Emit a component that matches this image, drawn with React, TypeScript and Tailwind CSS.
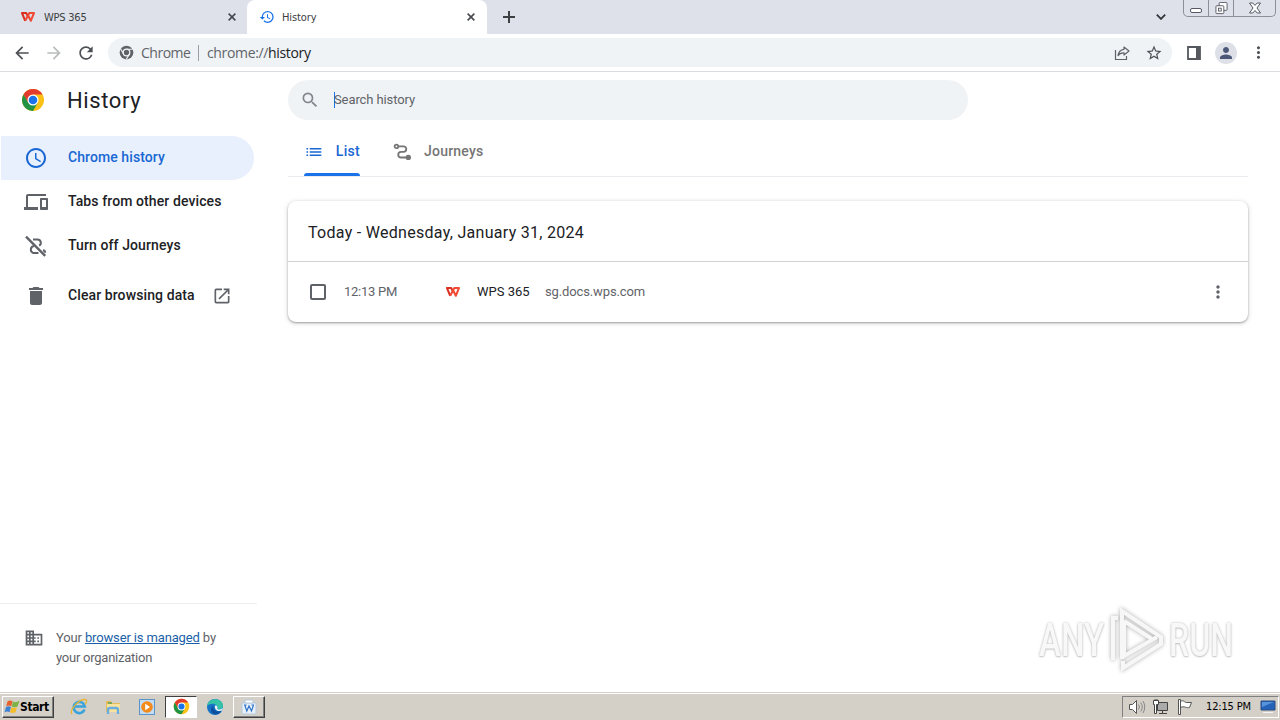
import React from 'react';
import {
  MdAccessTime,
  MdArrowBack,
  MdArrowForward,
  MdDelete,
  MdDevices,
  MdDomain,
  MdHistory,
  MdList,
  MdMoreVert,
  MdOpenInNew,
  MdPerson,
  MdRefresh,
  MdSearch,
  MdStarBorder,
} from 'react-icons/md';

interface IconProps {
  className?: string;
}

const WpsLogo: React.FC<IconProps> = ({ className }) => (
  <svg viewBox="0 0 16 12" className={className} fill="none" strokeLinejoin="round">
    <path d="M5.200 9.800L2 2h4.200L8 5.800" stroke="#d9301f" strokeWidth="2" />
    <path d="M5.200 9.800L9.300 2H14l-3.200 7.800L8 4" stroke="#f04a34" strokeWidth="2" />
  </svg>
);

const CloseIcon: React.FC<IconProps> = ({ className }) => (
  <svg viewBox="0 0 10 10" className={className} stroke="#45484d" strokeWidth="2">
    <path d="M.8.800l8.400 8.400M9.200.800L.8 9.200" />
  </svg>
);

const ChromeLogo: React.FC<IconProps> = ({ className }) => (
  <svg viewBox="0 0 48 48" className={className}>
    <circle cx="24" cy="24" r="22" fill="#fbc116" />
    <path d="M24 13H43.1A22 22 0 0 0 4.95 13L14.5 29.5 24 24z" fill="#e33b2e" />
    <path d="M14.5 29.5L4.95 13A22 22 0 0 0 24 46L33.5 29.5 24 24z" fill="#229342" />
    <circle cx="24" cy="24" r="11" fill="#fff" />
    <circle cx="24" cy="24" r="8.6" fill="#1a73e8" />
  </svg>
);

const ChromeMono: React.FC<IconProps> = ({ className }) => (
  <svg viewBox="0 0 48 48" className={className}>
    <circle cx="24" cy="24" r="22" fill="#5f6368" />
    <circle cx="24" cy="24" r="10.5" fill="none" stroke="#f1f3f4" strokeWidth="4" />
    <path d="M24 13.5H44M14.9 29.2L5 12M33.1 29.2L23 46.5" stroke="#f1f3f4" strokeWidth="3.6" />
  </svg>
);

const JourneysIcon: React.FC<IconProps> = ({ className }) => (
  <svg viewBox="0 0 20 18" className={className} fill="none" stroke="currentColor" strokeWidth="1.8">
    <circle cx="3.4" cy="3.4" r="1.8" />
    <path d="M5.300 3.400H10.600a2.700 2.700 0 0 1 0 5.400H8.100a2.800 2.800 0 0 0 0 5.700H14" />
    <circle cx="15.3" cy="14.4" r="1.8" fill="currentColor" />
  </svg>
);

const JourneysOffIcon: React.FC<IconProps> = ({ className }) => (
  <svg viewBox="0 0 24 24" className={className} fill="none" stroke="currentColor" strokeWidth="2">
    <path d="M2 2.7L21.2 21.9" strokeWidth="2.4" />
    <path d="M9 5.500h4.500a3.300 3.300 0 0 1 1.600 6.200M10 12a3.600 3.600 0 0 0-.7 7h5.200M19 16.300a2.600 2.600 0 0 1 2.200 2.400" />
  </svg>
);

const navItems = [
  { label: 'Tabs from other devices', icon: MdDevices },
  { label: 'Turn off Journeys', icon: JourneysOffIcon },
];

const TabStrip = () => (
  <div className="flex h-[34px] bg-[#dee1e9] text-[11px] text-[#3c4043] font-['DejaVu_Sans_Condensed','Noto_Sans',sans-serif]">
    <div className="flex w-[247px] items-center pl-5">
      <WpsLogo className="h-3 w-4" />
      <span className="ml-2 pt-0.5 tracking-[-0.22px]">WPS 365</span>
      <CloseIcon className="ml-auto mr-[11px] size-2" />
    </div>
    <div className="flex w-60 items-center rounded-t-lg bg-white pl-3">
      <MdHistory className="size-4 text-[#1a73e8]" />
      <span className="ml-[7px] pt-0.5 tracking-[-0.1px]">History</span>
      <CloseIcon className="ml-auto mr-[12px] size-2" />
    </div>
    <div className="flex w-[42px] items-center rounded-bl-lg pl-4">
      <svg viewBox="0 0 12 12" className="size-3" stroke="#3c4043" strokeWidth="2">
        <path d="M6 0v12M0 6h12" />
      </svg>
    </div>
    <svg viewBox="0 0 10 6" className="ml-auto mr-[17px] mt-[14px] h-[6px] w-[10px]" fill="none" stroke="#33363b" strokeWidth="1.800">
      <path d="M.8.700L5 4.900 9.200.700" />
    </svg>
    <div className="mr-1 flex h-[17px] w-[93px] rounded-b-[5px] border border-t-0 border-[#8b8f99]">
      <div className="flex w-[25px] items-end justify-center border-r border-[#8b8f99] pb-[3px]">
        <span className="h-[5px] w-3 rounded-[2px] border border-[#555963] bg-white" />
      </div>
      <div className="flex w-[25px] justify-center border-r border-[#8b8f99] pt-[2px]">
        <svg viewBox="0 0 14 14" className="size-[13px]" fill="#fff" stroke="#555963">
          <rect x="4.5" y=".5" width="8.5" height="8.5" rx="1" />
          <rect x="1" y="4" width="8.5" height="8.5" rx="1" />
          <rect x="3.7" y="6.7" width="3" height="3" />
        </svg>
      </div>
      <div className="flex flex-1 justify-center pt-[2px]">
        <svg viewBox="0 0 14 12" className="h-[12px] w-[14px]" fill="#fff" stroke="#555963" strokeLinejoin="round">
          <path d="M1.5 1h3.3L7 3.4 9.2 1h3.3L9 6l3.5 5H9.2L7 8.5 4.8 11H1.5L5 6z" />
        </svg>
      </div>
    </div>
  </div>
);

const Toolbar = () => (
  <div className="flex h-[38px] items-center border-b border-[#dadce0] bg-white pl-3 text-[#4d5156]">
    <MdArrowBack className="size-5" />
    <MdArrowForward className="ml-3 size-5 text-[#babcbe]" />
    <MdRefresh className="ml-3 size-5" />
    <div className="ml-3 flex h-[29px] w-16 flex-1 items-center rounded-full bg-[#eff3f6] pl-[11px] text-[14px] font-['Open_Sans',sans-serif]">
      <ChromeMono className="size-[15px]" />
      <span className="ml-[7px] w-[51px] tracking-[-0.5px] text-[#5f6368]">Chrome</span>
      <span className="ml-[6px] mr-2 h-4 w-px bg-[#9aa0a6]" />
      <span className="tracking-[-0.35px] text-[#5f6368]">
        chrome://<span className="text-[#202124]">history</span>
      </span>
      <svg viewBox="0 0 16 16" className="ml-auto size-4" fill="none" stroke="#5f6368" strokeWidth="1.2">
        <path d="M1.5 5v9.5h11V11" />
        <path d="M10 2l5 4-5 4V7.8C7 7.6 5.3 8.6 4 10.6 4.5 7 6.700 4.700 10 4.300z" strokeLinejoin="round" />
      </svg>
      <MdStarBorder className="ml-[15px] mr-[9px] size-[18px]" />
    </div>
    <svg viewBox="0 0 14 14" className="ml-[15px] size-[14px]">
      <path d="M1 1h12v12H1z" fill="none" stroke="#55585d" strokeWidth="1.8" />
      <path d="M9 1h4v12H9z" fill="#55585d" />
    </svg>
    <div className="ml-[14px] flex size-[22px] items-center justify-center rounded-full bg-[#dde1e7]">
      <MdPerson className="size-[18px] text-[#4b5878]" />
    </div>
    <MdMoreVert className="ml-[12px] mr-[12px] size-[19px]" />
  </div>
);

const Sidebar = () => (
  <aside className="flex w-64 shrink-0 flex-col text-[14px] font-medium text-[#202124]">
    <div className="flex h-14 items-center pl-[21px]">
      <ChromeLogo className="size-6" />
      <h1 className="ml-[22px] text-[22px] font-normal tracking-[0.6px]">History</h1>
    </div>
    <nav className="pt-2">
      <div className="ml-px mr-[2px] flex h-11 items-center rounded-r-full bg-[#e8f0fe] pl-[23px] text-[#1967d2]">
        <MdAccessTime className="size-6" />
        <span className="ml-5 pb-0.5 tracking-[0.08px]">Chrome history</span>
      </div>
      {navItems.map(({ label, icon: Icon }) => (
        <div key={label} className="flex h-11 items-center pl-6">
          <Icon className="size-6 text-[#5f6368]" />
          <span className="ml-5 pb-0.5 tracking-[0.1px]">{label}</span>
        </div>
      ))}
      <div className="mt-1.5 flex h-11 items-center pl-6">
        <MdDelete className="size-6 text-[#5f6368]" />
        <span className="ml-5 w-[127px] whitespace-nowrap pb-0.5 tracking-[0.1px]">Clear browsing data</span>
        <MdOpenInNew className="ml-[17px] size-5 text-[#5f6368]" />
      </div>
    </nav>
    <div className="mt-auto flex h-[89px] w-[257px] border-t border-[#eceef0] pl-6 pt-6">
      <MdDomain className="size-5 text-[#5f6368]" />
      <p className="ml-3 text-[13px] font-normal leading-5 tracking-[-0.14px] text-[#5f6368]">
        Your <span className="text-[#1a5fa8] underline">browser is managed</span> by
        <br />
        <span className="tracking-[-0.24px]">your organization</span>
      </p>
    </div>
  </aside>
);

const HistoryCard = () => (
  <section className="mt-6 h-[121px] w-[960px] rounded-lg bg-white shadow-[0_1px_2px_rgba(60,64,67,0.4),0_1px_5px_rgba(60,64,67,0.22)]">
    <div className="flex h-[61px] items-center border-b border-[#d0d3d6] pl-5 pt-1 text-[16px] tracking-[0.29px] text-[#202124]">
      Today - Wednesday, January 31, 2024
    </div>
    <div className="flex h-[60px] items-center pl-[22px] text-[13px] text-[#5f6368]">
      <span className="size-4 rounded-[2px] border-2 border-[#5f6368]" />
      <span className="ml-[18px] w-[101px] tracking-[-0.25px]">12:13 PM</span>
      <WpsLogo className="h-3 w-4" />
      <span className="ml-4 w-[53px] whitespace-nowrap text-[#202124]">WPS 365</span>
      <span className="ml-[15px] tracking-[-0.13px]">sg.docs.wps.com</span>
      <MdMoreVert className="ml-auto mr-5 size-5" />
    </div>
  </section>
);

const Watermark = () => (
  <div className="absolute bottom-[19px] right-[46px] flex h-[66px] items-center font-['Roboto',sans-serif] text-[46px] font-medium text-[#f8f8f8] [text-shadow:0_0_3px_#bbb,0_1px_2px_#ccc]">
    <span className="-ml-px w-[68px]">
      <span className="inline-block origin-left scale-x-[0.72]">ANY</span>
    </span>
    <svg viewBox="0 0 58 66" className="h-[66px] w-[58px] drop-shadow-[0_0_2px_#aaa]" fill="none" stroke="#f7f7f7" strokeWidth="4">
      <path d="M15 52V4L54 30v7L16 61v-7" />
      <path d="M6 53V11h5M17 14l28 18M17 14v35l33-19" />
    </svg>
    <span className="ml-[4px] w-[65px]">
      <span className="inline-block origin-left scale-x-[0.7]">RUN</span>
    </span>
  </div>
);

const Taskbar = () => (
  <footer className="flex h-7 items-center border-t border-[#d4d0c8] bg-[#d4d0c8] pl-[2px] font-['DejaVu_Sans_Condensed',sans-serif] text-[11px] text-black shadow-[inset_0_1px_0_#fff]">
    <div className="flex h-[22px] w-[52px] items-center border border-b-[#404040] border-l-white border-r-[#404040] border-t-white pl-px shadow-[inset_-1px_-1px_0_#808080]">
      <svg viewBox="0 0 16 16" className="size-4 shrink-0">
        <path d="M3.600 2.200q2.500-1.500 5 0L7.200 7.300q-2.500-1.500-5 0z" fill="#e8602c" />
        <path d="M9 2.600q2.800 1.500 6.500-.8L13.500 7.500q-3.300 1.500-5.800 0z" fill="#7cb342" />
        <path d="M2 7.900q2.500-1.500 5 0l-1.500 5.300q-2.400-1.500-5 0z" fill="#3e83d1" />
        <path d="M7.500 8.200q2.500 1.500 5.500.100L11.500 13.200q-3 1.500-5.500 0z" fill="#f4bd28" />
      </svg>
      <span className="text-[12px] font-bold tracking-[-0.4px]">Start</span>
    </div>
    <svg viewBox="0 0 18 18" className="ml-4 size-[18px]">
      <path d="M14.500 11.500a5.600 5.600 0 1 1 .3-3H5" fill="none" stroke="#3ba3dc" strokeWidth="2.600" />
      <path d="M2 16C-1 12 9 1 15 1.500c3 .500 1 4 0 5" fill="none" stroke="#e5b534" strokeWidth="1.300" />
    </svg>
    <svg viewBox="0 0 18 18" className="ml-4 size-[18px]">
      <path d="M2 3h5l1 2h8v9H2z" fill="#e3bd58" />
      <path d="M3 6h13v8H3z" fill="#f7e39d" />
      <path d="M4 16v-4q0-2 2-2h6q2 0 2 2v4" fill="none" stroke="#69aede" strokeWidth="2.400" />
      <path d="M4 5h4" stroke="#5aa35a" strokeWidth="1.500" />
    </svg>
    <svg viewBox="0 0 18 18" className="ml-4 size-[18px]">
      <rect x="1.500" y="1.500" width="15" height="15" fill="#c3dcf3" stroke="#5b94c9" />
      <circle cx="9" cy="9" r="5.800" fill="#f28a1c" />
      <path d="M7.200 5.800v6.400L12 9z" fill="#fff" />
    </svg>
    <div className="ml-[9px] flex h-[22px] w-8 items-center justify-center border border-b-white border-l-[#404040] border-r-white border-t-[#404040] bg-white">
      <ChromeLogo className="size-[17px]" />
    </div>
    <svg viewBox="0 0 18 18" className="ml-[9px] size-[18px]">
      <circle cx="9" cy="9" r="8" fill="#1673c5" />
      <path d="M1 8C2-1 17-1 17 8c0 3-3 4-5.500 3C13 7 6 3 1 8z" fill="#35c2a7" />
      <path d="M7.500 8c-1 4 3 7 8 4.800C13 18 5 17 5 12c0-2 1-3.500 2.500-4z" fill="#0b4f9e" />
      <path d="M9 7.500c2-.500 3 1 2.300 3.200q2.500 2 5.500-.700l-.5 2.500C12 14 8 12 9 7.500z" fill="#e8f4f8" />
    </svg>
    <div className="ml-[9px] flex h-[22px] w-8 items-center justify-center border border-b-[#404040] border-l-white border-r-[#404040] border-t-white shadow-[inset_-1px_-1px_0_#808080]">
      <svg viewBox="0 0 16 16" className="size-4">
        <path d="M1 4h14v11H1z" fill="#e8f1fa" stroke="#b7c9dc" />
        <path d="M4 1h8v3H4z" fill="#fff" stroke="#b7c9dc" />
        <path d="M3 6h2.500M10.500 6H13M3.800 6l2 6L8 7l2.500 5 2-6" fill="none" stroke="#3275c9" strokeWidth="1.200" />
      </svg>
    </div>
    <div className="ml-auto mr-px flex h-[22px] w-[157px] items-center border border-b-white border-l-[#808080] border-r-white border-t-[#808080] pl-[5px]">
      <svg viewBox="0 0 18 16" className="h-4 w-[18px]" fill="#fff" stroke="#555">
        <path d="M1.500 5.500h3l4-4v13l-4-4h-3z" />
        <path d="M10.500 5.500q2 2.500 0 5M12.700 3.500q3.200 4.500 0 9M15 2q3.500 6 0 12" fill="none" stroke="#888" />
      </svg>
      <svg viewBox="0 0 18 16" className="ml-[6px] h-4 w-[18px]" fill="#fff" stroke="#444">
        <path d="M5.500 3.500h10v8h-10z" fill="#aaa" />
        <path d="M1.500 1.500h5v4h-2v9h-2v-9h-1zM7 14.500h8M10.500 12v2M3 0v2M5 0v2" />
      </svg>
      <svg viewBox="0 0 18 16" className="ml-[6px] h-4 w-[18px]" fill="#fff" stroke="#555">
        <path d="M2.500 15.500v-15h2v15zM4.500 2.500c3-2 4 1 6 1h5l-2 5c-3 1-5-2-9 0z" />
      </svg>
      <span className="ml-3 w-[47px] whitespace-nowrap pt-0.5 tracking-[-0.15px]">12:15 PM</span>
      <svg viewBox="0 0 16 14" className="ml-[7px] h-[14px] w-4">
        <path d="M1 1h14v9H1z" fill="#2463b8" stroke="#2a4d80" />
        <path d="M2 2h12L2 7z" fill="#5794dc" />
        <path d="M3 12.500h10" stroke="#f4f4f4" />
      </svg>
    </div>
  </footer>
);

export default function App() {
  return (
    <div className="flex h-[720px] w-[1280px] flex-col overflow-hidden bg-white font-['Roboto',sans-serif]">
      <TabStrip />
      <Toolbar />
      <div className="relative flex h-[620px]">
        <Sidebar />
        <main className="ml-8 pt-2">
          <div className="flex h-10 w-[680px] items-center rounded-full bg-[#f0f3f5] pl-3 text-[13px] text-[#5f6368]">
            <MdSearch className="size-5 text-[#80868b]" />
            <span className="ml-[14px] h-4 w-px bg-[#1a73e8]" />
            <span className="-ml-px tracking-[-0.1px]">Search history</span>
          </div>
          <div className="flex h-[57px] w-[960px] border-b border-[#e8eaed] pl-4 text-[14px] font-medium tracking-[0.3px]">
            <div className="flex w-14 flex-col text-[#1967d2]">
              <div className="flex h-[53px] items-center pt-[11px]">
                <MdList className="size-5" />
                <span className="ml-3 pb-0.5">List</span>
              </div>
              <span className="h-[3px] rounded-t bg-[#1a73e8]" />
            </div>
            <div className="ml-[33px] flex h-[53px] items-center pt-[11px] text-[#757575]">
              <JourneysIcon className="h-[18px] w-5" />
              <span className="ml-[11px] pb-0.5 tracking-[0.22px]">Journeys</span>
            </div>
          </div>
          <HistoryCard />
        </main>
        <Watermark />
      </div>
      <Taskbar />
    </div>
  );
}
